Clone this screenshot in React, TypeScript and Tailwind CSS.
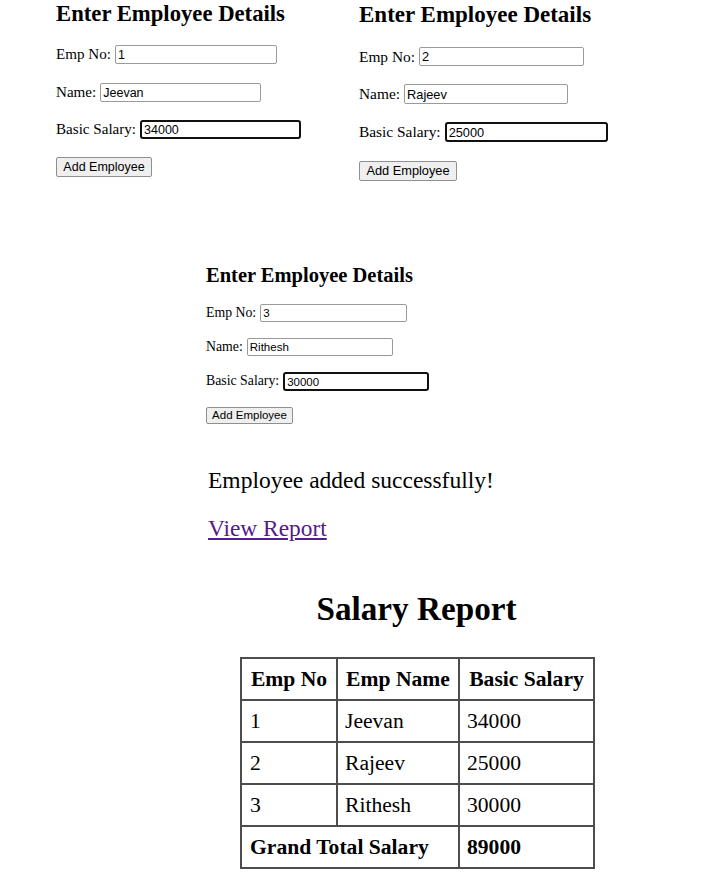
import React from "react";

type Row = { label: string; value: string; focus?: boolean; rowCls: string; inputCls: string };

type PanelProps = {
  wrapCls: string;
  headCls: string;
  labelCls: string;
  inputText: string;
  rows: Row[];
  btnCls: string;
};

const EntryPanel = ({ wrapCls, headCls, labelCls, inputText, rows, btnCls }: PanelProps) => {
  return (
    <div className={wrapCls}>
      <h2 className={`font-bold whitespace-nowrap ${headCls}`}>Enter Employee Details</h2>
      {rows.map((r) => (
        <div key={r.label} className={`flex items-center ${r.rowCls}`}>
          <span className={`whitespace-nowrap ${labelCls}`}>{r.label}</span>
          <input
            readOnly
            value={r.value}
            className={`h-full rounded-[2px] bg-white px-[2px] font-['Liberation_Sans',Arial,sans-serif] text-black outline-none ${inputText} ${
              r.focus ? "border-2 border-[#101010] rounded-[3px]" : "border border-[#9a9a9a]"
            } ${r.inputCls}`}
          />
        </div>
      ))}
      <button
        className={`flex items-center justify-center rounded-[2px] border border-[#8f8f8f] bg-[#efefef] font-['Liberation_Sans',Arial,sans-serif] text-black ${btnCls}`}
      >
        Add Employee
      </button>
    </div>
  );
};

const employees = [
  { no: "1", name: "Jeevan", salary: "34000" },
  { no: "2", name: "Rajeev", salary: "25000" },
  { no: "3", name: "Rithesh", salary: "30000" },
];

export default function App() {
  return (
    <div className="h-[876px] w-[723px] overflow-hidden bg-white font-['Liberation_Serif','Times_New_Roman',serif] text-black">
      <div className="flex items-start">
        <EntryPanel
          wrapCls="ml-[56px] w-[303px] pt-[1px]"
          headCls="text-[22.7px] leading-[25px]"
          labelCls="text-[15.1px] mr-[4px]"
          inputText="text-[12.5px]"
          rows={[
            { label: "Emp No:", value: "1", rowCls: "mt-[19px] h-[19px]", inputCls: "w-[162px]" },
            { label: "Name:", value: "Jeevan", rowCls: "mt-[19px] h-[19px]", inputCls: "w-[161px]" },
            { label: "Basic Salary:", value: "34000", focus: true, rowCls: "mt-[18px] h-[19px]", inputCls: "w-[161px]" },
          ]}
          btnCls="mt-[18px] h-[20px] w-[96px] text-[12.5px]"
        />
        <EntryPanel
          wrapCls="pt-[2px]"
          headCls="text-[23px] leading-[25px]"
          labelCls="text-[15.4px] mr-[4px]"
          inputText="text-[12.8px]"
          rows={[
            { label: "Emp No:", value: "2", rowCls: "mt-[20px] h-[19px]", inputCls: "w-[165px]" },
            { label: "Name:", value: "Rajeev", rowCls: "mt-[18px] h-[20px]", inputCls: "w-[164px]" },
            { label: "Basic Salary:", value: "25000", focus: true, rowCls: "mt-[18px] h-[20px]", inputCls: "w-[163px]" },
          ]}
          btnCls="mt-[19px] h-[20px] w-[98px] text-[12.8px]"
        />
      </div>

      <EntryPanel
        wrapCls="ml-[206px] mt-[83px]"
        headCls="text-[20.5px] leading-[23px]"
        labelCls="text-[13.8px] mr-[4px]"
        inputText="text-[11.5px]"
        rows={[
          { label: "Emp No:", value: "3", rowCls: "mt-[17px] h-[18px]", inputCls: "w-[147px]" },
          { label: "Name:", value: "Rithesh", rowCls: "mt-[16px] h-[18px]", inputCls: "w-[146px]" },
          { label: "Basic Salary:", value: "30000", focus: true, rowCls: "mt-[16px] h-[19px]", inputCls: "w-[146px]" },
        ]}
        btnCls="mt-[16px] h-[17px] w-[87px] text-[11.5px]"
      />

      <div className="ml-[208px]">
        <p className="mt-[43px] text-[23.5px] leading-[26px]">Employee added successfully!</p>
        <a href="#" className="mt-[22px] block w-fit text-[23.4px] leading-[26px] text-[#551a8b] underline">
          View Report
        </a>
      </div>

      <div className="ml-[240px] w-[353px]">
        <h1 className="mt-[49px] text-center text-[33.2px] font-bold leading-[37px]">Salary Report</h1>
        <table className="mt-[30px] w-[353px] table-fixed border-collapse border-2 border-[#4d4d4d] text-[21.6px]">
          <colgroup>
            <col className="w-[96px]" />
            <col className="w-[122px]" />
            <col className="w-[135px]" />
          </colgroup>
          <thead>
            <tr className="h-[42px]">
              <th className="border-2 border-[#4d4d4d] px-[7px] text-center font-bold">Emp No</th>
              <th className="border-2 border-[#4d4d4d] px-[7px] text-center font-bold">Emp Name</th>
              <th className="border-2 border-[#4d4d4d] px-[7px] text-center font-bold">Basic Salary</th>
            </tr>
          </thead>
          <tbody>
            {employees.map((e) => (
              <tr key={e.no} className="h-[42px]">
                <td className="border-2 border-[#4d4d4d] px-[8px]">{e.no}</td>
                <td className="border-2 border-[#4d4d4d] px-[7px]">{e.name}</td>
                <td className="border-2 border-[#4d4d4d] px-[7px]">{e.salary}</td>
              </tr>
            ))}
            <tr className="h-[42px]">
              <td colSpan={2} className="border-2 border-[#4d4d4d] px-[8px] font-bold">
                Grand Total Salary
              </td>
              <td className="border-2 border-[#4d4d4d] px-[7px] font-bold">89000</td>
            </tr>
          </tbody>
        </table>
      </div>
    </div>
  );
}
